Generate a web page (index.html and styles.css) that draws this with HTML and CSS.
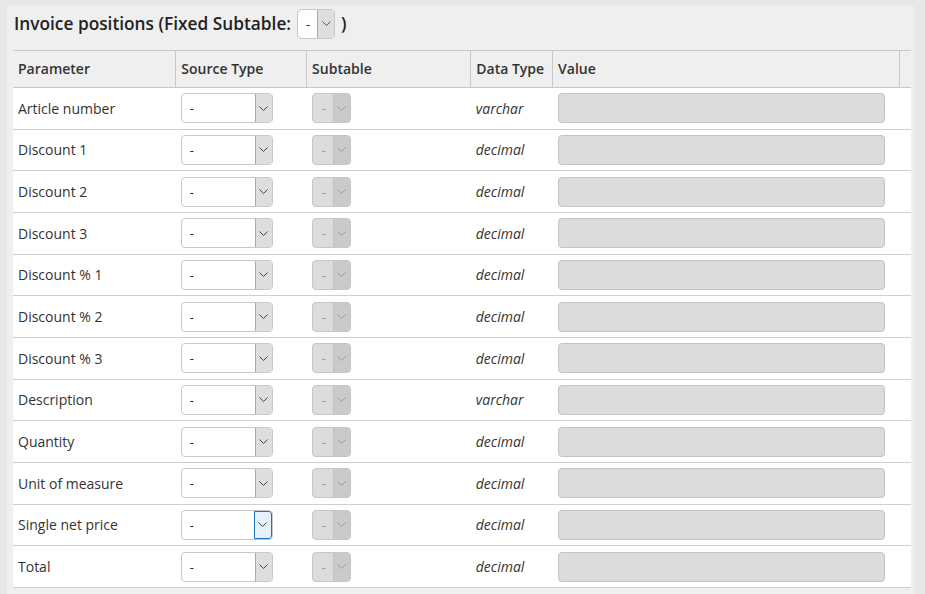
FILE: index.html
```html
<html lang="en">
<head>
    <meta charset="UTF-8">
    <meta name="viewport" content="width=device-width, initial-scale=1.0">
    <title>Invoice positions</title>
    <link rel="stylesheet" href="styles.css">
</head>
<body>
    <div class="panel">
        <div class="title">
            <h3>Invoice positions (Fixed Subtable:</h3>
            <div class="sel small"><span class="val">-</span><span class="btn"><svg width="9" height="5" viewBox="0 0 9 5"><path d="M0.5 0.5L4.5 4.5L8.5 0.5" fill="none" stroke="#555" stroke-width="1"/></svg></span></div>
            <h3>)</h3>
        </div>
        <table class="params">
            <thead>
                <tr>
                    <th class="c1">Parameter</th>
                    <th class="c2">Source Type</th>
                    <th class="c3">Subtable</th>
                    <th class="c4">Data Type</th>
                    <th class="c5">Value</th>
                    <th class="c6"></th>
                </tr>
            </thead>
            <tbody id="rows"></tbody>
        </table>
    </div>
    <script>
        var params = [
            ['Article number', 'varchar'],
            ['Discount 1', 'decimal'],
            ['Discount 2', 'decimal'],
            ['Discount 3', 'decimal'],
            ['Discount % 1', 'decimal'],
            ['Discount % 2', 'decimal'],
            ['Discount % 3', 'decimal'],
            ['Description', 'varchar'],
            ['Quantity', 'decimal'],
            ['Unit of measure', 'decimal'],
            ['Single net price', 'decimal'],
            ['Total', 'decimal']
        ];
        var chev = '<svg width="9" height="5" viewBox="0 0 9 5"><path d="M0.5 0.5L4.5 4.5L8.5 0.5" fill="none" stroke="COL" stroke-width="1"/></svg>';
        var html = '';
        params.forEach(function (p, i) {
            var focus = i === 10 ? ' focus' : '';
            html += '<tr>' +
                '<td>' + p[0] + '</td>' +
                '<td><div class="sel src' + focus + '"><span class="val">-</span><span class="btn">' + chev.replace('COL', '#444') + '</span></div></td>' +
                '<td><div class="sel sub"><span class="val">-</span><span class="btn">' + chev.replace('COL', '#999') + '</span></div></td>' +
                '<td class="type">' + p[1] + '</td>' +
                '<td><div class="value"></div></td>' +
                '<td></td>' +
                '</tr>';
        });
        document.getElementById('rows').innerHTML = html;
    </script>
</body>
</html>
```
FILE: styles.css
```css
body {
    margin: 0;
    background: #e7e7e7;
    font-family: "Open Sans", Arial, sans-serif;
    color: #333;
}
.panel {
    margin: 5px 10px 0 7px;
    background: #efefef;
    border-radius: 5px 5px 0 0;
    padding: 4px 4px 20px 6px;
}
.title {
    display: flex;
    align-items: center;
    height: 29px;
    margin-bottom: 12px;
    padding-left: 1px;
}
.title h3 {
    margin: 0;
    font-size: 17.3px;
    font-weight: 600;
    color: #222;
}
.sel {
    display: flex;
    height: 30px;
    box-sizing: border-box;
    border: 1px solid #c9c9c9;
    border-radius: 4px;
    background: #fff;
    overflow: hidden;
    font-size: 13px;
}
.sel .val {
    flex: 1;
    display: flex;
    align-items: center;
    padding-left: 8px;
    color: #222;
}
.sel .btn {
    width: 16px;
    display: flex;
    align-items: center;
    justify-content: center;
    background: #dedede;
    border-left: 1px solid #a9a9a9;
}
.small {
    width: 38px;
    margin: 0 6px 0 6px;
}
.src {
    width: 92px;
}
.src.focus .btn {
    background: #e5f1fb;
    border: 1px solid #1a72c6;
    border-radius: 0 3px 3px 0;
}
.sub {
    width: 39px;
    background: #dcdcdc;
    border-color: #c6c6c6;
}
.sub .val {
    color: #999;
    padding-left: 9px;
}
.sub .btn {
    background: #cacaca;
    border-left: 1px solid #c0c0c0;
}
.params {
    width: 898px;
    border-collapse: collapse;
    font-size: 14px;
}
.params th {
    height: 37px;
    text-align: left;
    font-weight: 600;
    padding: 0 5px 1px;
    border-top: 1px solid #c8c8c8;
    border-bottom: 1px solid #c8c8c8;
    border-left: 1px solid #c8c8c8;
    background: #efefef;
}
.params th.c1 {
    border-left: none;
}
.c1 { width: 153px; }
.c2 { width: 120px; }
.c3 { width: 154px; }
.c4 { width: 71px; }
.c5 { width: 336px; }
.c6 { width: 1px; }
.params td {
    height: 41.66px;
    padding: 0 5px;
    background: #fff;
    border-bottom: 1px solid #cfcfcf;
    vertical-align: middle;
}
.params td.type {
    font-style: italic;
}
.value {
    width: 327px;
    height: 30px;
    box-sizing: border-box;
    background: #dcdcdc;
    border: 1px solid #c3c3c3;
    border-radius: 4px;
}
```
